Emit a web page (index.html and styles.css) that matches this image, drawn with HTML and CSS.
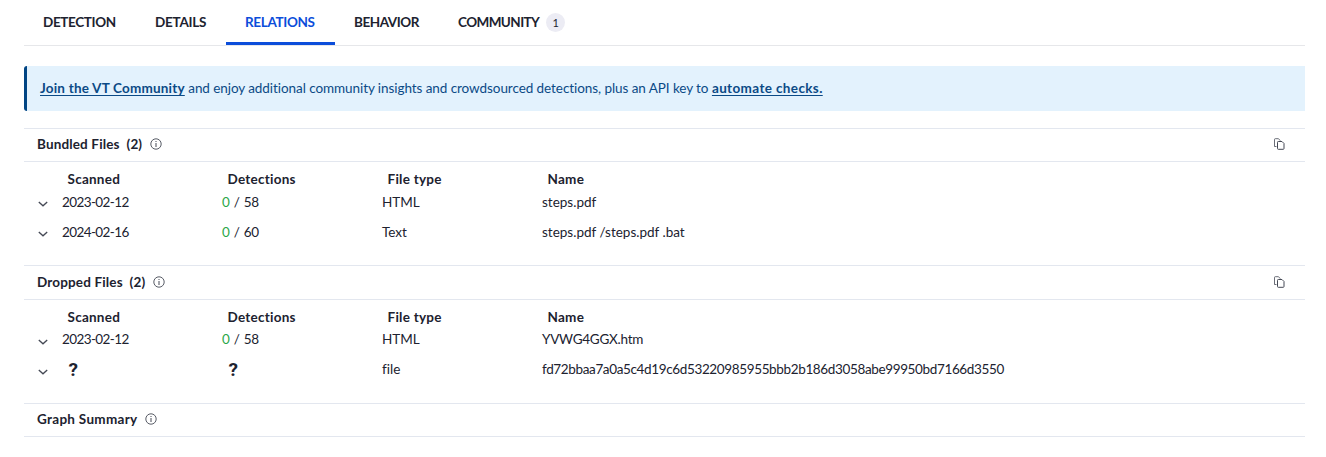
FILE: index.html
```html
<!DOCTYPE html>
<html lang="en">
<head>
<meta charset="utf-8">
<title>Relations</title>
<link rel="stylesheet" href="styles.css">
</head>
<body>
<svg width="0" height="0" class="defs">
  <symbol id="info" viewBox="0 0 12 12"><circle cx="6" cy="6" r="5.2" fill="none" stroke="currentColor" stroke-width=".9"/><path d="M6 5v4M6 3v1" fill="none" stroke="currentColor" stroke-width="1"/></symbol>
  <symbol id="copy" viewBox="0 0 12 12"><path d="M3.500 8.500H1.500V1.500a.8.8 0 0 1 .8-.8h3.200l1.800 2" fill="none" stroke="currentColor" stroke-width=".8"/><path d="M5.300 3.500h3.700l2 2v5a.8.8 0 0 1-.8.8H5.300a.8.8 0 0 1-.8-.8v-6.200a.8.8 0 0 1 .8-.8z" fill="none" stroke="currentColor" stroke-width="1"/></symbol>
  <symbol id="chevron" viewBox="0 0 10 6"><path d="M.8.9 5 4.800 9.200.9" fill="none" stroke="currentColor" stroke-width="1.3"/></symbol>
</svg>
<nav class="tabs">
  <a class="tab detection"><span>DETECTION</span></a>
  <a class="tab details"><span>DETAILS</span></a>
  <a class="tab relations active"><span>RELATIONS</span></a>
  <a class="tab behavior"><span>BEHAVIOR</span></a>
  <a class="tab community"><span>COMMUNITY</span><span class="badge">1</span></a>
</nav>
<div class="alert"><p><b class="join">Join the VT Community</b> <span class="pitch">and enjoy additional community insights and crowdsourced detections, plus an API key to</span> <b class="auto">automate checks.</b></p></div>
<section class="card first">
  <header class="head"><h2>Bundled Files&nbsp; (2)</h2><svg class="info"><use href="#info"/></svg><svg class="copy"><use href="#copy"/></svg></header>
  <div class="table">
    <div class="row labels"><span></span><span>Scanned</span><span>Detections</span><span>File type</span><span>Name</span></div>
    <div class="row"><svg class="chevron"><use href="#chevron"/></svg><span class="date">2023-02-12</span><span class="score"><i>0</i> / 58</span><span>HTML</span><span>steps.pdf</span></div>
    <div class="row"><svg class="chevron"><use href="#chevron"/></svg><span class="date">2024-02-16</span><span class="score"><i>0</i> / 60</span><span>Text</span><span>steps.pdf /steps.pdf .bat</span></div>
  </div>
</section>
<section class="card second">
  <header class="head"><h2>Dropped Files&nbsp; (2)</h2><svg class="info"><use href="#info"/></svg><svg class="copy"><use href="#copy"/></svg></header>
  <div class="table">
    <div class="row labels"><span></span><span>Scanned</span><span>Detections</span><span>File type</span><span>Name</span></div>
    <div class="row"><svg class="chevron"><use href="#chevron"/></svg><span class="date">2023-02-12</span><span class="score"><i>0</i> / 58</span><span>HTML</span><span class="upper">YVWG4GGX.htm</span></div>
    <div class="row"><svg class="chevron"><use href="#chevron"/></svg><span class="unknown">?</span><span class="unknown">?</span><span>file</span><span class="hash">fd72bbaa7a0a5c4d19c6d53220985955bbb2b186d3058abe99950bd7166d3550</span></div>
  </div>
</section>
<section class="card last">
  <header class="head"><h2 class="graph">Graph Summary</h2><svg class="info"><use href="#info"/></svg></header>
</section>
</body>
</html>
```
FILE: styles.css
```css
* { box-sizing: border-box; }
body { margin: 0; padding: 0 21px 0 24px; background: #fff; color: #20222f; font: 13.5px/20px Lato, "Open Sans", sans-serif; font-variant-ligatures: none; }
.defs { display: block; }
h2, p { margin: 0; }
svg { color: #454955; flex: none; }
.tabs { display: flex; height: 46px; border-bottom: 1px solid #e6e7ea; }
.tab { display: flex; height: 45px; padding: 2px 0 0 19px; align-items: center; font-weight: 700; letter-spacing: -.35px; border-bottom: 3px solid transparent; white-space: nowrap; }
.detection { width: 112px; }
.details { width: 90px; letter-spacing: -.25px; }
.relations { width: 109px; }
.behavior { width: 104px; letter-spacing: -.45px; }
.community { letter-spacing: -.57px; }
.active { color: #0b4dda; border-color: #0b4dda; }
.badge { width: 19px; height: 19px; margin-left: 7px; border-radius: 50%; background: #ececf4; font-size: 11px; font-weight: 400; line-height: 19px; letter-spacing: 0; text-align: center; }
.alert { height: 45px; margin-top: 20px; padding: 12px 13px; border-left: 3px solid #014584; border-radius: 3px 0 0 3px; background: #e3f2fd; color: #0b4a86; white-space: nowrap; }
.alert b { text-decoration: underline; text-underline-offset: 2px; }
.join { letter-spacing: .2px; }
.pitch { letter-spacing: -.07px; }
.auto { letter-spacing: .37px; }
.card { border-top: 1px solid #e3e7ef; }
.first { margin-top: 17px; height: 137px; }
.second { height: 138px; }
.head { display: flex; align-items: center; height: 33px; padding: 0 20.5px 2px 13px; border-bottom: 1px solid #e3e7ef; }
.second .head { height: 34px; }
.head h2 { font-size: 13.5px; line-height: 20px; font-weight: 700; letter-spacing: .15px; }
.head .graph { letter-spacing: .3px; }
.info { width: 12px; height: 12px; margin-left: 7.5px; }
.copy { width: 12px; height: 12px; margin-left: auto; }
.table { padding-top: 7px; }
.row { display: grid; grid-template-columns: 24px 160px 160px 160px 1fr; height: 30px; padding-left: 14px; align-items: center; white-space: nowrap; }
.labels { height: 20px; font-weight: 700; letter-spacing: .25px; }
.labels span { padding-left: 5.5px; }
.row i { font-style: normal; color: #2aa748; }
.labels + .row { margin-top: -2px; }
.second .labels + .row { margin-top: -3px; }
.chevron { width: 10px; height: 6px; margin-top: 4px; }
.second .chevron { margin-top: 6px; }
.date { letter-spacing: -.6px; }
.score { word-spacing: .8px; letter-spacing: -.2px; }
.upper { letter-spacing: -.25px; }
.hash { letter-spacing: -.36px; }
.unknown { padding: 1px 0 0 6.5px; font: 700 19px/20px Roboto, sans-serif; }
```
